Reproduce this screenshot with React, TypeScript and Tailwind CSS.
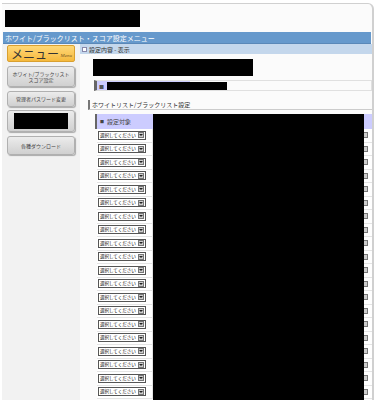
import React from "react";

const jp = { fontFamily: '"Noto Sans CJK JP", "Noto Sans", sans-serif' };

function Sel() {
  return (
    <div className="flex items-center h-[9px] w-[48px] border border-[#555] bg-white overflow-hidden">
      <span className="flex-1 text-[4.6px] leading-[7px] tracking-[-0.1px] text-[#111] pl-[1px] whitespace-nowrap overflow-hidden">選択してください</span>
      <span className="shrink-0 w-[6px] h-[6px] mr-[1px] bg-[#ccc] border border-[#777] flex items-center justify-center">
        <span className="block w-0 h-0 border-l-[2px] border-r-[2px] border-t-[2px] border-l-transparent border-r-transparent border-t-[#222]" />
      </span>
    </div>
  );
}

function SideBtn({ children, h }: { children: React.ReactNode; h: string }) {
  return (
    <div className={`mx-[5px] ${h} rounded-[3px] border border-[#b0b0b0] bg-gradient-to-b from-[#ececec] to-[#d0d0d0] shadow-[1px_1px_1px_#aaa] flex items-center justify-center text-center text-[5px] leading-[6px] text-[#444] whitespace-nowrap`}>
      {children}
    </div>
  );
}

export default function App() {
  const rows = Array.from({ length: 20 });
  return (
    <div className="w-[379px] h-[400px] overflow-hidden bg-white" style={jp}>
      <div className="ml-[2px] mt-[3px] w-[372px] h-[397px] border-r-2 border-t border-[#d0d0d0] rounded-tr-[6px] bg-[#fbfbfb] flex flex-col">
        <div className="h-[28px] pt-[6px] pl-[3px]">
          <div className="w-[135px] h-[17px] bg-black" />
        </div>
        <div className="h-[12px] mx-[1px] bg-[#6699cc] border-b border-[#5a88b8] text-white text-[7px] leading-[12px] pl-[2px] whitespace-nowrap">
          ホワイト/ブラックリスト・スコア設定メニュー
        </div>
        <div className="flex flex-1">
          <div className="w-[78px] bg-[#f2f2f2] flex flex-col pt-[1px]">
            <div className="mx-[5px] h-[17px] rounded-[2px] border border-[#d9a030] bg-gradient-to-b from-[#ffd876] to-[#f5b93c] flex items-end pl-[3px] pr-[2px] whitespace-nowrap overflow-hidden">
              <span className="text-[12px] leading-[15px] text-[#333]">メニュー</span>
              <span className="text-[5px] leading-[6px] italic text-[#775522] ml-auto mb-[2px]" style={{ fontFamily: '"Liberation Serif", serif' }}>Menu</span>
            </div>
            <div className="h-[4px]" />
            <SideBtn h="h-[21px]">
              <span>ホワイト/ブラックリスト<br />スコア設定</span>
            </SideBtn>
            <div className="h-[4px]" />
            <SideBtn h="h-[16px]">管理者パスワード変更</SideBtn>
            <div className="h-[3px]" />
            <SideBtn h="h-[22px]">
              <div className="w-[54px] h-[16px] bg-black" />
            </SideBtn>
            <div className="h-[4px]" />
            <SideBtn h="h-[19px]">各種ダウンロード</SideBtn>
          </div>
          <div className="flex-1 flex flex-col">
            <div className="h-[10px] bg-[#c4d7ec] flex items-center pl-[2px] text-[6px] text-[#333] whitespace-nowrap">
              <span className="w-[5px] h-[5px] bg-white border border-[#88a] mr-[2px]" />
              設定内容 - 表示
            </div>
            <div className="ml-[13px] mt-[5px] w-[160px] h-[17px] bg-black" />
            <div className="relative ml-[14px] mt-[4px] h-[11px] border border-[#e0e0e0] border-l-[3px] border-l-[#666] flex">
              <div className="w-[93px] bg-[#ccccff] text-[5px] leading-[9px] pl-[2px] text-[#555]">■</div>
              <div className="absolute left-[10px] top-[1px] w-[120px] h-[8px] bg-black" />
            </div>
            <div className="ml-[8px] mt-[9px] h-[10px] border-l-2 border-[#777] border-b border-b-[#ccc] pl-[2px] text-[6px] leading-[9px] text-[#333] whitespace-nowrap">
              ホワイトリスト/ブラックリスト設定
            </div>
            <div className="ml-[15px] mt-[4px] flex flex-1">
              <div className="w-[2px] h-[15px] bg-[#666]" />
              <div className="w-[56px] flex flex-col">
                <div className="h-[15px] bg-[#ccccff] text-[6px] leading-[15px] pl-[3px] text-[#444] whitespace-nowrap">
                  <span className="text-[4px] mr-[3px]">■</span>設定対象
                </div>
                {rows.map((_, i) => (
                  <div key={i} className="h-[13.5px] border-b border-r border-[#e4e4e4] bg-white flex items-center pl-[1px]">
                    <Sel />
                  </div>
                ))}
              </div>
              <div className="w-[211px] bg-black" />
              <div className="flex-1 flex flex-col overflow-hidden">
                <div className="h-[15px] bg-[#ccccff]" />
                {rows.map((_, i) => (
                  <div key={i} className="h-[13.5px] border-b border-[#e4e4e4] bg-white flex items-center">
                    <span className="w-[4px] h-[6px] bg-[#ccc] border border-[#777] border-l-0" />
                  </div>
                ))}
              </div>
            </div>
          </div>
        </div>
      </div>
    </div>
  );
}
